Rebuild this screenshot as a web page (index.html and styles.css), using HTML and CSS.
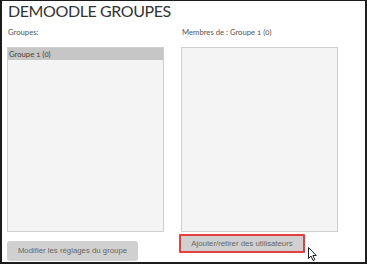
FILE: index.html
```html
<!DOCTYPE html>
<html lang="fr">
<head>
<meta charset="utf-8">
<link rel="stylesheet" href="styles.css">
</head>
<body>
<div class="frame">
  <h1 class="title">DEMOODLE GROUPES</h1>
  <div class="cols">
    <div class="col col-left">
      <div class="label">Groupes:</div>
      <div class="listbox">
        <div class="option selected">Groupe <span class="num">1</span> (<span class="num">0</span>)</div>
      </div>
      <div class="btn btn-left">Modifier les réglages du groupe</div>
    </div>
    <div class="col col-right">
      <div class="label">Membres de : Groupe <span class="num">1</span> (<span class="num">0</span>)</div>
      <div class="listbox"></div>
      <div class="btn btn-right">Ajouter/retirer des utilisateurs</div>
    </div>
  </div>
  <svg class="cursor" width="10" height="15" viewBox="0 0 10 15"><path d="M0.5 0.5 L0.5 11.5 L3 9 L5 13.5 L6.8 12.7 L4.9 8.5 L8.3 8.5 Z" fill="#fff" stroke="#222" stroke-width="1" stroke-linejoin="round"/></svg>
</div>
</body>
</html>
```
FILE: styles.css
```css
html, body {
  margin: 0;
  padding: 0;
  background: #fff;
}
.frame {
  position: relative;
  width: 367px;
  height: 264px;
  box-sizing: border-box;
  border: 2px solid #1c1c1c;
  border-top-width: 1px;
  padding: 0 0 0 5px;
  font-family: Lato, "Open Sans", sans-serif;
  overflow: hidden;
}
.title {
  margin: 0;
  padding-top: 0;
  padding-left: 1px;
  font-size: 16px;
  font-weight: 400;
  line-height: 20px;
  color: #333;
  letter-spacing: -0.4px;
}
.cols {
  display: flex;
  gap: 17px;
}
.col {
  display: flex;
  flex-direction: column;
}
.col-left { width: 157px; }
.col-right { width: 157px; }
.label {
  font-size: 7.7px;
  color: #555;
  line-height: 12px;
  margin-top: 5px;
  padding-left: 1px;
  height: 21px;
}
.num { font-variant-numeric: oldstyle-nums; }
.listbox {
  height: 185px;
  box-sizing: border-box;
  border: 1px solid #cfcfcf;
  background: #f4f4f4;
}
.option {
  font-size: 7.7px;
  color: #444;
  line-height: 12px;
  padding-left: 1px;
}
.option.selected { background: #c6c6c6; }
.btn {
  font-family: "Liberation Sans", Arial, sans-serif;
  font-size: 7.8px;
  color: #666;
  background: #d0d0d0;
  border-radius: 3px;
  text-align: center;
  box-sizing: border-box;
}
.btn-left {
  width: 131px;
  height: 20px;
  line-height: 20px;
  margin-top: 9px;
}
.btn-right {
  width: 126px;
  height: 19px;
  line-height: 15px;
  margin-top: 2px;
  margin-left: -2px;
  border: 2px solid #e53e3e;
  border-radius: 1px;
}
.cursor {
  position: absolute;
  left: 306px;
  top: 246px;
}
```
